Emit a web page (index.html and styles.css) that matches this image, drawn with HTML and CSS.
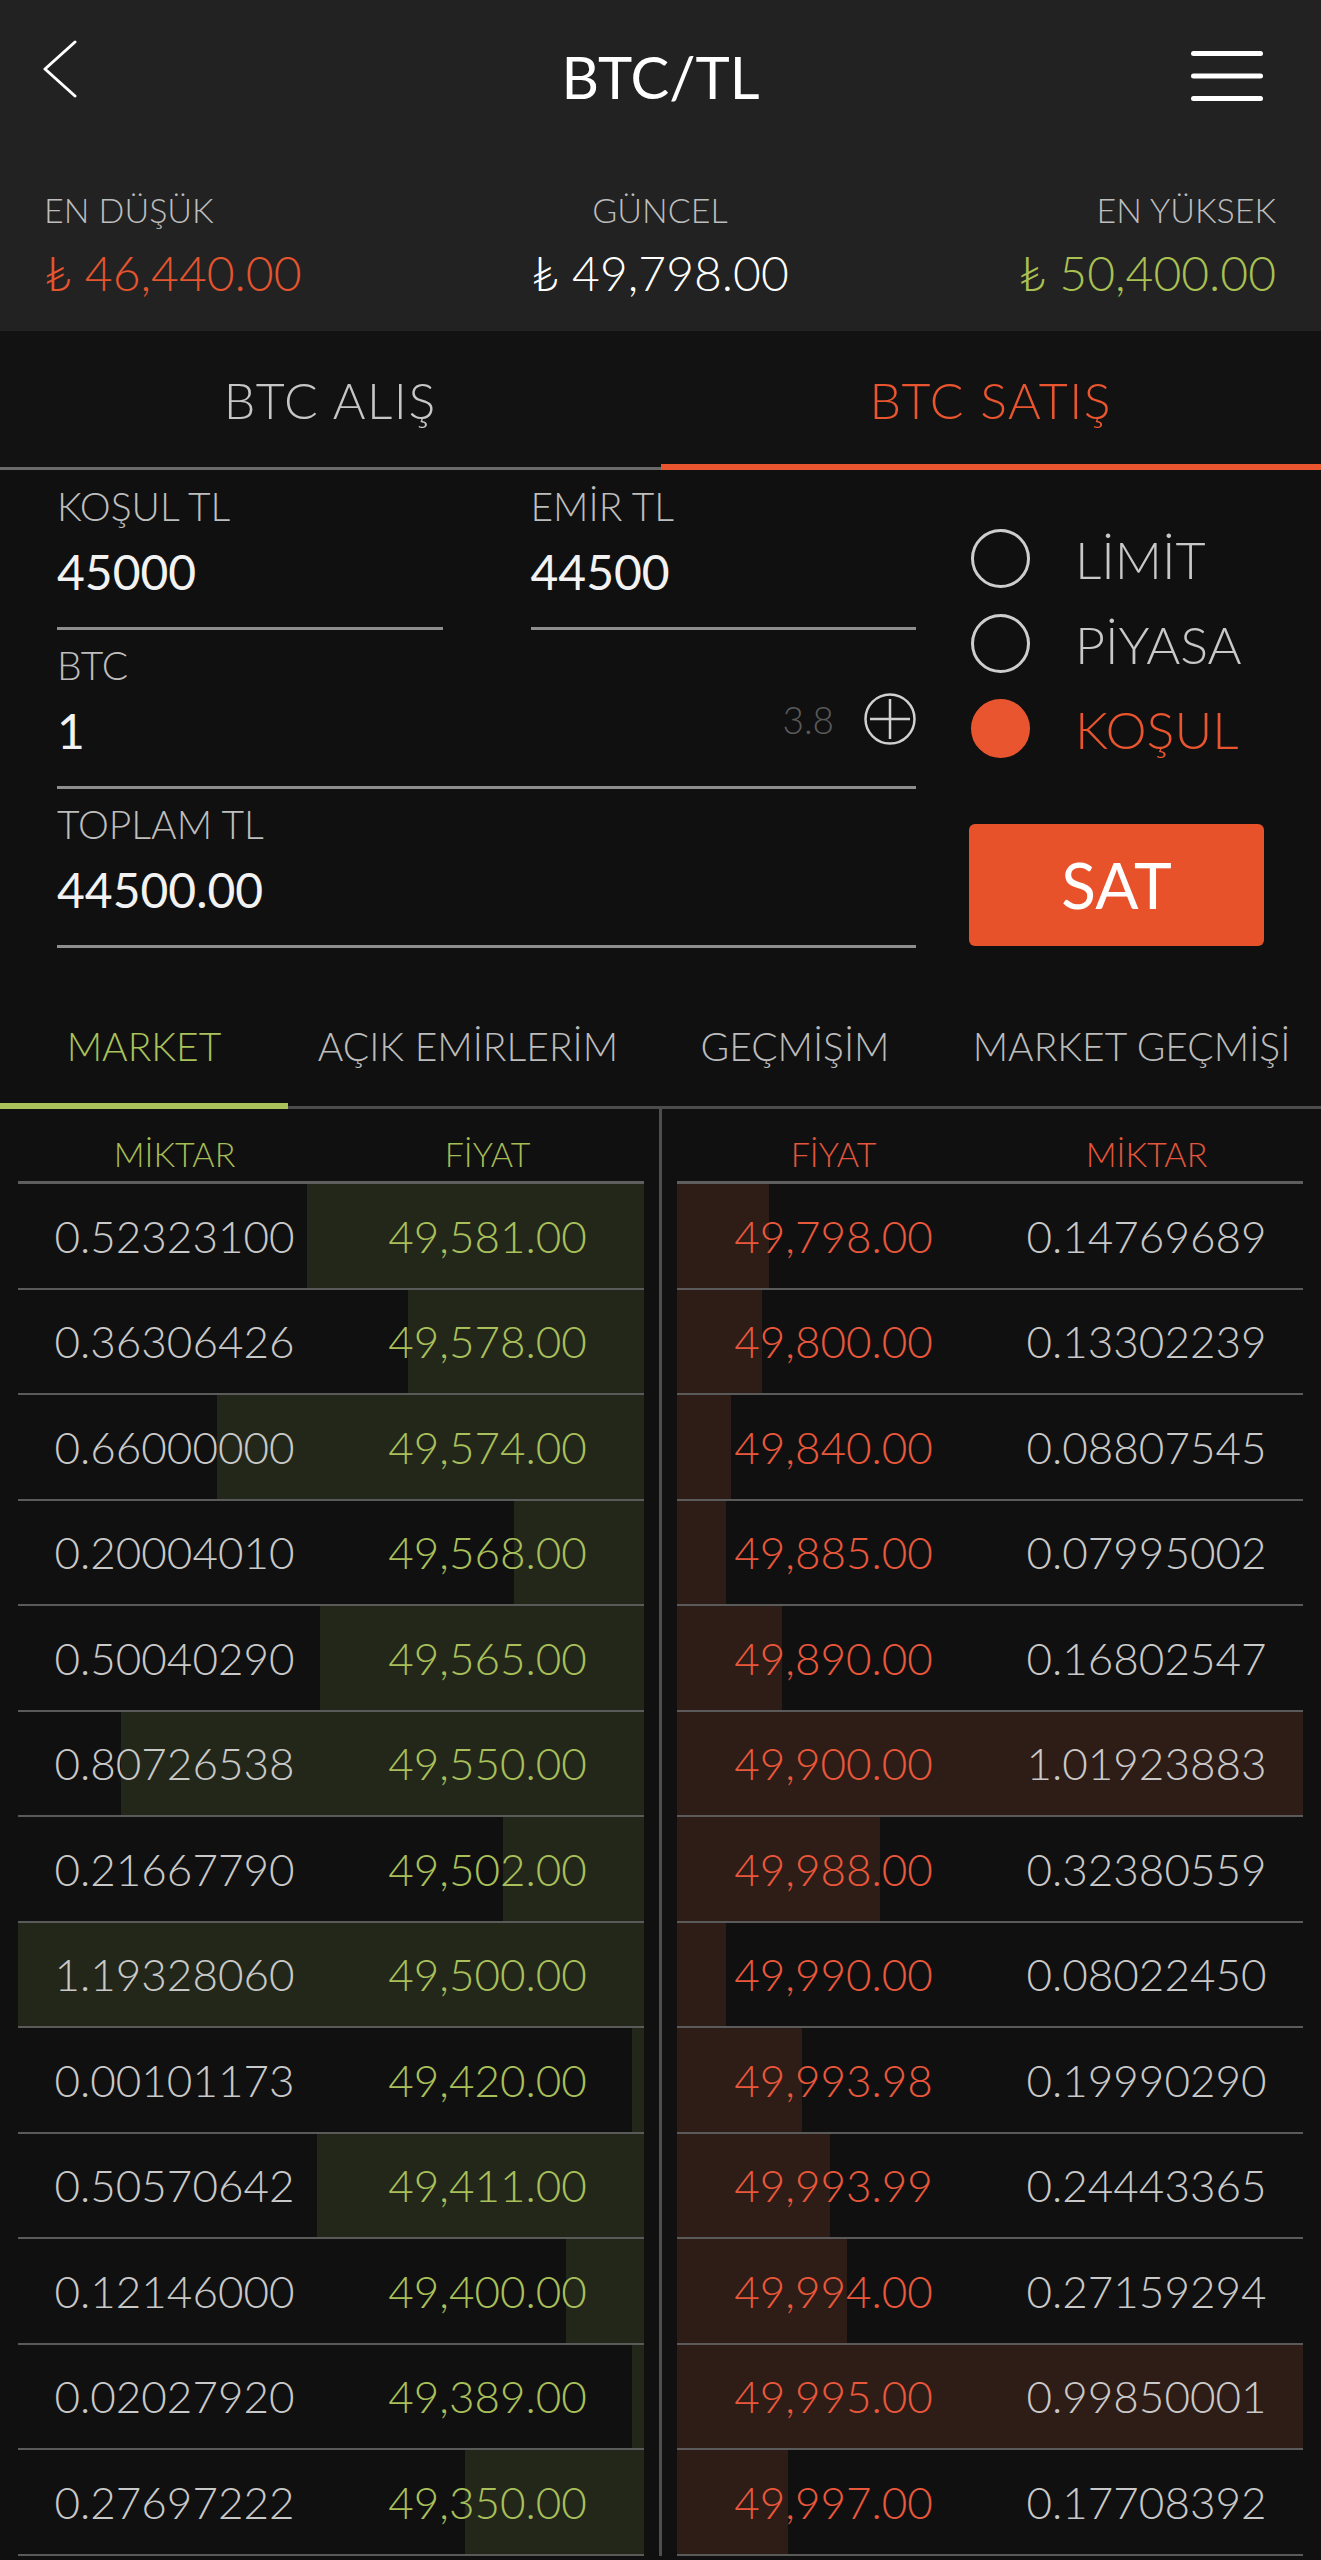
FILE: index.html
```html
<!DOCTYPE html>
<html lang="tr">
<head>
<meta charset="utf-8">
<title>BTC/TL</title>
<link rel="stylesheet" href="styles.css">
</head>
<body>
<header class="topbar">
  <div class="nav">
    <div class="nav-side nav-left">
      <svg class="back" width="34" height="58" viewBox="0 0 34 58"><polyline points="32,2 2,29 32,56" fill="none" stroke="#ffffff" stroke-width="3" stroke-linecap="round" stroke-linejoin="round"/></svg>
    </div>
    <h1 class="title">BTC/TL</h1>
    <div class="nav-side nav-right">
      <svg class="menu" width="72" height="50" viewBox="0 0 72 50"><g stroke="#ffffff" stroke-width="5" stroke-linecap="round"><line x1="2.5" y1="2.5" x2="69.5" y2="2.5"/><line x1="2.5" y1="25" x2="69.5" y2="25"/><line x1="2.5" y1="47.5" x2="69.5" y2="47.5"/></g></svg>
    </div>
  </div>
  <div class="stats">
    <div class="stat stat-low"><div class="stat-label">EN DÜŞÜK</div><div class="stat-value">₺ 46,440.00</div></div>
    <div class="stat stat-cur"><div class="stat-label">GÜNCEL</div><div class="stat-value">₺ 49,798.00</div></div>
    <div class="stat stat-high"><div class="stat-label">EN YÜKSEK</div><div class="stat-value">₺ 50,400.00</div></div>
  </div>
</header>

<nav class="trade-tabs">
  <div class="trade-tab buy">BTC ALIŞ</div>
  <div class="trade-tab sell">BTC SATIŞ</div>
</nav>

<section class="order-form">
  <div class="fields">
    <div class="field-pair">
      <div class="field"><div class="field-label">KOŞUL TL</div><div class="field-value">45000</div></div>
      <div class="field"><div class="field-label">EMİR TL</div><div class="field-value">44500</div></div>
    </div>
    <div class="field">
      <div class="field-label">BTC</div>
      <div class="field-value with-aside">
        <span>1</span>
        <span class="aside"><span class="avail">3.8</span><svg class="plus" width="52" height="52" viewBox="0 0 52 52"><circle cx="26" cy="26" r="24.5" fill="none" stroke="#d0d0d0" stroke-width="2.5"/><g stroke="#d0d0d0" stroke-width="2.5"><line x1="6" y1="26" x2="46" y2="26"/><line x1="26" y1="6" x2="26" y2="46"/></g></svg></span>
      </div>
    </div>
    <div class="field"><div class="field-label">TOPLAM TL</div><div class="field-value">44500.00</div></div>
  </div>
  <div class="side">
    <div class="radios">
      <div class="radio"><span class="dot"></span><span class="radio-label">LİMİT</span></div>
      <div class="radio"><span class="dot"></span><span class="radio-label">PİYASA</span></div>
      <div class="radio active"><span class="dot"></span><span class="radio-label">KOŞUL</span></div>
    </div>
    <button class="sell-btn" type="button">SAT</button>
  </div>
</section>

<nav class="book-tabs">
  <div class="book-tab active">MARKET</div>
  <div class="book-tab">AÇIK EMİRLERİM</div>
  <div class="book-tab">GEÇMİŞİM</div>
  <div class="book-tab">MARKET GEÇMİŞİ</div>
</nav>

<section class="book">
  <div class="book-side bids">
    <div class="book-head"><span>MİKTAR</span><span>FİYAT</span></div>
    <div class="book-row" style="--w:53.8%"><span class="qty">0.52323100</span><span class="price">49,581.00</span></div>
    <div class="book-row" style="--w:37.7%"><span class="qty">0.36306426</span><span class="price">49,578.00</span></div>
    <div class="book-row" style="--w:68.2%"><span class="qty">0.66000000</span><span class="price">49,574.00</span></div>
    <div class="book-row" style="--w:20.8%"><span class="qty">0.20004010</span><span class="price">49,568.00</span></div>
    <div class="book-row" style="--w:51.8%"><span class="qty">0.50040290</span><span class="price">49,565.00</span></div>
    <div class="book-row" style="--w:83.5%"><span class="qty">0.80726538</span><span class="price">49,550.00</span></div>
    <div class="book-row" style="--w:22.5%"><span class="qty">0.21667790</span><span class="price">49,502.00</span></div>
    <div class="book-row" style="--w:100%"><span class="qty">1.19328060</span><span class="price">49,500.00</span></div>
    <div class="book-row" style="--w:1.9%"><span class="qty">0.00101173</span><span class="price">49,420.00</span></div>
    <div class="book-row" style="--w:52.2%"><span class="qty">0.50570642</span><span class="price">49,411.00</span></div>
    <div class="book-row" style="--w:12.5%"><span class="qty">0.12146000</span><span class="price">49,400.00</span></div>
    <div class="book-row" style="--w:1.9%"><span class="qty">0.02027920</span><span class="price">49,389.00</span></div>
    <div class="book-row" style="--w:28.6%"><span class="qty">0.27697222</span><span class="price">49,350.00</span></div>
  </div>
  <div class="book-divider"></div>
  <div class="book-side asks">
    <div class="book-head"><span>FİYAT</span><span>MİKTAR</span></div>
    <div class="book-row" style="--w:14.7%"><span class="price">49,798.00</span><span class="qty">0.14769689</span></div>
    <div class="book-row" style="--w:13.6%"><span class="price">49,800.00</span><span class="qty">0.13302239</span></div>
    <div class="book-row" style="--w:8.6%"><span class="price">49,840.00</span><span class="qty">0.08807545</span></div>
    <div class="book-row" style="--w:7.9%"><span class="price">49,885.00</span><span class="qty">0.07995002</span></div>
    <div class="book-row" style="--w:16.7%"><span class="price">49,890.00</span><span class="qty">0.16802547</span></div>
    <div class="book-row" style="--w:100%"><span class="price">49,900.00</span><span class="qty">1.01923883</span></div>
    <div class="book-row" style="--w:32.4%"><span class="price">49,988.00</span><span class="qty">0.32380559</span></div>
    <div class="book-row" style="--w:7.9%"><span class="price">49,990.00</span><span class="qty">0.08022450</span></div>
    <div class="book-row" style="--w:20%"><span class="price">49,993.98</span><span class="qty">0.19990290</span></div>
    <div class="book-row" style="--w:24.5%"><span class="price">49,993.99</span><span class="qty">0.24443365</span></div>
    <div class="book-row" style="--w:27.2%"><span class="price">49,994.00</span><span class="qty">0.27159294</span></div>
    <div class="book-row" style="--w:100%"><span class="price">49,995.00</span><span class="qty">0.99850001</span></div>
    <div class="book-row" style="--w:17.8%"><span class="price">49,997.00</span><span class="qty">0.17708392</span></div>
  </div>
</section>
</body>
</html>
```

FILE: styles.css
```css
* { box-sizing: border-box; }

html, body {
  margin: 0;
  padding: 0;
  background: #101010;
}

body {
  font-family: "Lato", "DejaVu Sans", sans-serif;
  font-weight: 300;
  color: #d0d0d0;
  width: 1321px;
}

/* ---------- top bar ---------- */
.topbar {
  background: #222222;
  height: 331px;
}

.nav {
  display: flex;
  height: 154px;
  align-items: center;
}

.nav-side {
  width: 200px;
  align-self: flex-start;
  display: flex;
}

.nav-left { padding: 40px 0 0 43px; }
.nav-right { padding: 51px 58px 0 0; justify-content: flex-end; }

.back, .menu { display: block; }

.title {
  flex: 1;
  margin: 0;
  text-align: center;
  font-size: 58px;
  font-weight: 400;
  line-height: 1;
  color: #ffffff;
}

.stats {
  display: grid;
  grid-template-columns: 1fr 1fr 1fr;
  padding: 39px 45px 0 44px;
}

.stat-label {
  font-size: 34px;
  line-height: 1;
  color: #bdbdbd;
}

.stat-value {
  margin-top: 22px;
  font-size: 48px;
  line-height: 1;
}

.stat-low { text-align: left; }
.stat-low .stat-value { color: #e5552f; }
.stat-cur { text-align: center; }
.stat-cur .stat-value { color: #ffffff; }
.stat-high { text-align: right; }
.stat-high .stat-value { color: #a9c052; }

/* ---------- buy / sell tabs ---------- */
.trade-tabs {
  display: flex;
  height: 139px;
  background: #121212;
}

.trade-tab {
  flex: 1;
  height: 139px;
  display: flex;
  align-items: center;
  justify-content: center;
  font-size: 50px;
  letter-spacing: 1.5px;
  line-height: 1;
}

.trade-tab.buy {
  color: #c6c6c6;
  padding: 4px 0 3px;
  border-bottom: 3px solid #6a6a6a;
}

.trade-tab.sell {
  color: #e8552e;
  padding: 4px 0 0;
  border-bottom: 6px solid #e8552e;
}

/* ---------- order form ---------- */
.order-form {
  display: grid;
  grid-template-columns: 859px 295px;
  column-gap: 53px;
  padding: 17px 57px 0;
}

.fields {
  display: flex;
  flex-direction: column;
  gap: 16px;
}

.field-pair {
  display: grid;
  grid-template-columns: 1fr 1fr;
  column-gap: 88px;
}

.field {
  padding-bottom: 31px;
  border-bottom: 3px solid #8e8e8e;
}

.field-label {
  font-size: 39px;
  line-height: 1;
  color: #bebebe;
}

.field-value {
  margin-top: 22px;
  font-size: 48px;
  font-weight: 400;
  line-height: 1;
  color: #f2f2f2;
}

.with-aside {
  display: flex;
  justify-content: space-between;
  align-items: flex-start;
}

.aside {
  display: flex;
  align-items: center;
  gap: 30px;
  margin-top: -14px;
}

.avail {
  font-size: 37px;
  font-weight: 300;
  line-height: 1;
  color: #5a5a5a;
}

.plus { display: block; }

.side {
  display: flex;
  flex-direction: column;
  padding-top: 29px;
}

.radio {
  display: flex;
  align-items: center;
  height: 85px;
}

.dot {
  width: 59px;
  height: 59px;
  margin-left: 2px;
  border-radius: 50%;
  border: 3px solid #cdcdcd;
}

.radio-label {
  margin-left: 45px;
  font-size: 52px;
  line-height: 1;
  color: #c8c8c8;
}

.radio.active .dot {
  background: #e8552e;
  border-color: #e8552e;
}

.radio.active .radio-label { color: #e8552e; }

.sell-btn {
  margin-top: 53px;
  height: 122px;
  border: 0;
  border-radius: 6px;
  background: #e8522a;
  color: #ffffff;
  font-family: inherit;
  font-weight: 400;
  font-size: 64px;
  line-height: 1;
  padding: 0;
}

/* ---------- book tabs ---------- */
.book-tabs {
  display: grid;
  grid-template-columns: 288px 360px 294px 1fr;
  align-items: end;
}

.book-tab {
  padding: 79px 0 40px;
  border-bottom: 3px solid #4c4c4c;
  text-align: center;
  font-size: 39px;
  line-height: 1;
  color: #bcbcbc;
  white-space: nowrap;
}

.book-tab.active {
  padding-bottom: 37px;
  border-bottom: 6px solid #a9c25a;
  color: #a9c25a;
}

/* ---------- order book ---------- */
.book {
  display: grid;
  grid-template-columns: 626px 3px 626px;
  column-gap: 15px;
  padding: 0 18px;
}

.book-divider {
  background: #4e4e4e;
}

.book-head {
  display: grid;
  grid-template-columns: 1fr 1fr;
  height: 75px;
  padding-top: 28px;
  border-bottom: 3px solid #5e5e5e;
  font-size: 34px;
  line-height: 1;
  text-align: center;
}

.bids .book-head { color: #a6bc55; }
.asks .book-head { color: #e4563b; }

.book-row {
  display: grid;
  grid-template-columns: 1fr 1fr;
  align-items: center;
  height: 105.5px;
  border-bottom: 2px solid #5a5a5a;
  font-size: 44px;
  line-height: 1;
  text-align: center;
}

.bids .book-row {
  background: linear-gradient(to left, #22271a var(--w), transparent var(--w));
}

.asks .book-row {
  background: linear-gradient(to right, #2e1c16 var(--w), transparent var(--w));
}

.qty { color: #c9c9c9; }
.bids .price { color: #a9c05a; }
.asks .price { color: #e9583b; }
```
